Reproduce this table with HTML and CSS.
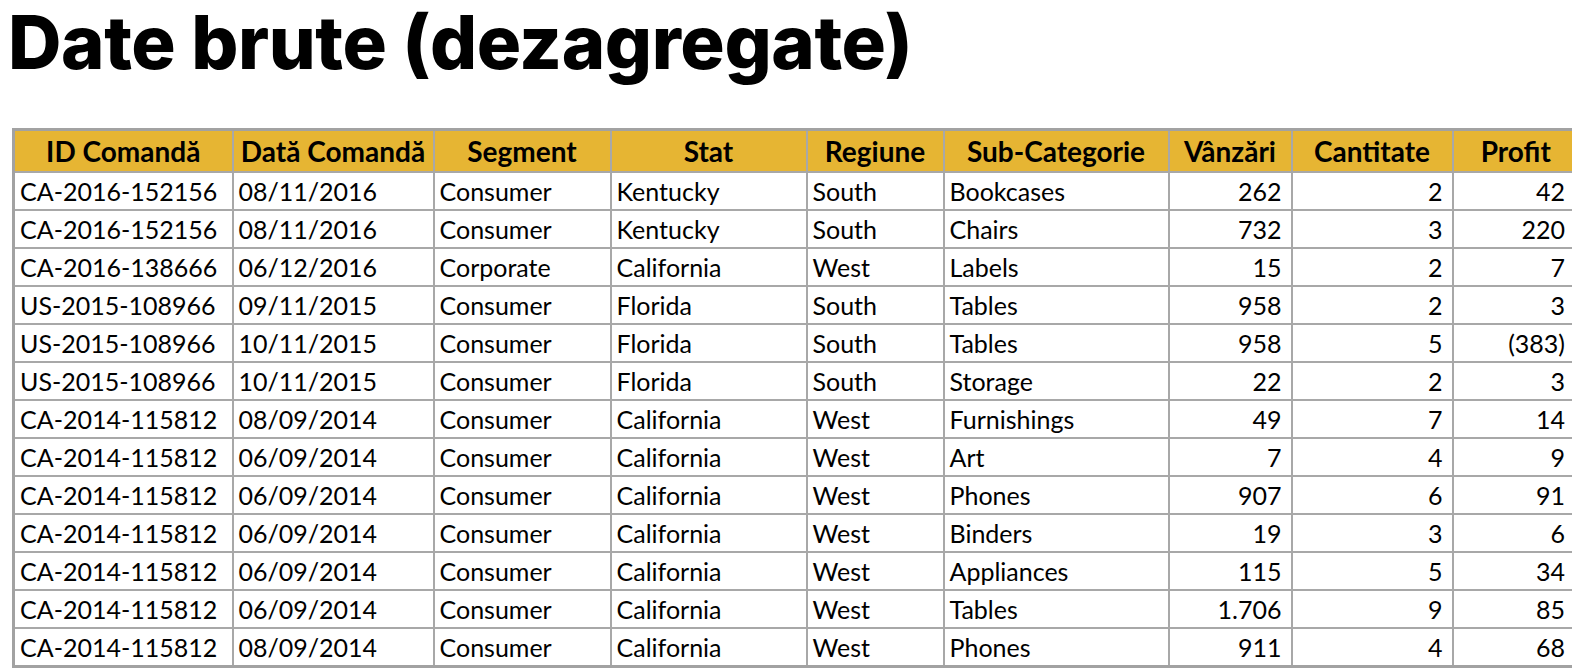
FILE: index.html
```html
<!DOCTYPE html>
<html lang="ro">
<head>
<meta charset="utf-8">
<title>Date brute (dezagregate)</title>
<link rel="stylesheet" href="styles.css">
</head>
<body>
<div id="page">
<h1>Date brute (dezagregate)</h1>
<table id="data">
    <colgroup>
        <col class="c-id"><col class="c-date"><col class="c-seg"><col class="c-stat">
        <col class="c-reg"><col class="c-sub"><col class="c-sales"><col class="c-qty"><col class="c-profit">
    </colgroup>
    <thead>
    <tr><th>ID Comandă</th><th>Dată Comandă</th><th>Segment</th><th>Stat</th><th>Regiune</th><th>Sub-Categorie</th><th>Vânzări</th><th>Cantitate</th><th>Profit</th></tr>
    </thead>
    <tbody>
    <tr><td>CA-2016-152156</td><td>08/11/2016</td><td>Consumer</td><td>Kentucky</td><td>South</td><td>Bookcases</td><td class="num">262</td><td class="num">2</td><td class="num">42</td></tr>
    <tr><td>CA-2016-152156</td><td>08/11/2016</td><td>Consumer</td><td>Kentucky</td><td>South</td><td>Chairs</td><td class="num">732</td><td class="num">3</td><td class="num">220</td></tr>
    <tr><td>CA-2016-138666</td><td>06/12/2016</td><td>Corporate</td><td>California</td><td>West</td><td>Labels</td><td class="num">15</td><td class="num">2</td><td class="num">7</td></tr>
    <tr><td>US-2015-108966</td><td>09/11/2015</td><td>Consumer</td><td>Florida</td><td>South</td><td>Tables</td><td class="num">958</td><td class="num">2</td><td class="num">3</td></tr>
    <tr><td>US-2015-108966</td><td>10/11/2015</td><td>Consumer</td><td>Florida</td><td>South</td><td>Tables</td><td class="num">958</td><td class="num">5</td><td class="num">(383)</td></tr>
    <tr><td>US-2015-108966</td><td>10/11/2015</td><td>Consumer</td><td>Florida</td><td>South</td><td>Storage</td><td class="num">22</td><td class="num">2</td><td class="num">3</td></tr>
    <tr><td>CA-2014-115812</td><td>08/09/2014</td><td>Consumer</td><td>California</td><td>West</td><td>Furnishings</td><td class="num">49</td><td class="num">7</td><td class="num">14</td></tr>
    <tr><td>CA-2014-115812</td><td>06/09/2014</td><td>Consumer</td><td>California</td><td>West</td><td>Art</td><td class="num">7</td><td class="num">4</td><td class="num">9</td></tr>
    <tr><td>CA-2014-115812</td><td>06/09/2014</td><td>Consumer</td><td>California</td><td>West</td><td>Phones</td><td class="num">907</td><td class="num">6</td><td class="num">91</td></tr>
    <tr><td>CA-2014-115812</td><td>06/09/2014</td><td>Consumer</td><td>California</td><td>West</td><td>Binders</td><td class="num">19</td><td class="num">3</td><td class="num">6</td></tr>
    <tr><td>CA-2014-115812</td><td>06/09/2014</td><td>Consumer</td><td>California</td><td>West</td><td>Appliances</td><td class="num">115</td><td class="num">5</td><td class="num">34</td></tr>
    <tr><td>CA-2014-115812</td><td>06/09/2014</td><td>Consumer</td><td>California</td><td>West</td><td>Tables</td><td class="num">1.706</td><td class="num">9</td><td class="num">85</td></tr>
    <tr><td>CA-2014-115812</td><td>08/09/2014</td><td>Consumer</td><td>California</td><td>West</td><td>Phones</td><td class="num">911</td><td class="num">4</td><td class="num">68</td></tr>
    </tbody>
</table>
</div>
</body>
</html>
```

FILE: styles.css
```css
html, body {
    margin: 0;
    background: #fff;
    overflow: hidden;
}
#page {
    padding: 0 0 0 12px;
}
h1 {
    font-family: Inter, "Open Sans", sans-serif;
    font-weight: 800;
    font-size: 74px;
    line-height: 84px;
    letter-spacing: -0.4px;
    color: #000;
    margin: 0 0 44px -4px;
}

#data {
    border-collapse: collapse;
    table-layout: fixed;
    width: 1566px;
    border: 3px solid #a2a2a2;
    font-family: Lato, "Open Sans", sans-serif;
    font-size: 25px;
    color: #000;
}
#data col.c-id {width: 219px;}
#data col.c-date {width: 201px;}
#data col.c-seg {width: 177px;}
#data col.c-stat {width: 196px;}
#data col.c-reg {width: 137px;}
#data col.c-sub {width: 225px;}
#data col.c-sales {width: 123px;}
#data col.c-qty {width: 161px;}
#data col.c-profit {width: 127px;}

#data th, #data td {
    border: 2px solid #a8a8a8;
    white-space: nowrap;
    overflow: hidden;
}
#data th {
    background: #e6b533;
    font-size: 28px;
    font-weight: 700;
    text-align: center;
    height: 40px;
    padding: 0 2px;
}
#data td {
    height: 36px;
    padding: 0 4px 0 5px;
    text-align: left;
}
#data td.num {
    text-align: right;
    padding: 0 9px 0 4px;
}
#data td.num:last-child {
    padding-right: 13px;
}
```
